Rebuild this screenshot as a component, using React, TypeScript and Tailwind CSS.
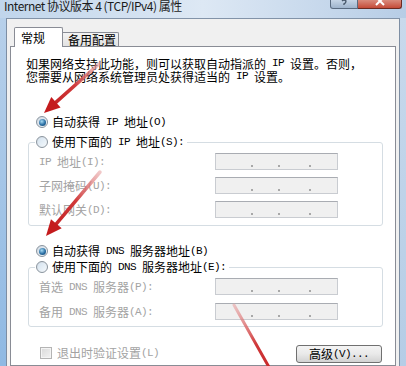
import React from "react";

function T({ s, className = "" }: { s: string; className?: string }) {
  const parts = s.split(/([\x20-\x7e]+)/).filter((p) => p.length > 0);
  return (
    <span className={`flex items-center whitespace-pre ${className}`}>
      {parts.map((p, i) =>
        /^[\x20-\x7e]+$/.test(p) ? (
          <span
            key={i}
            className="font-['Liberation_Mono',monospace] text-[11px] tracking-[-0.6px] whitespace-pre"
          >
            {p}
          </span>
        ) : (
          <span key={i}>{p}</span>
        )
      )}
    </span>
  );
}

function Radio({ checked }: { checked?: boolean }) {
  return (
    <span className="flex h-[12px] w-[12px] shrink-0 items-center justify-center rounded-full border border-[#8a949e] bg-gradient-to-br from-[#cfd9e3] to-[#f7fafc]">
      {checked ? (
        <span className="h-[7px] w-[7px] rounded-full bg-[radial-gradient(circle_at_40%_35%,#a8dcf5,#2a6ea3_55%,#123f66)]" />
      ) : (
        <span className="h-[8px] w-[8px] rounded-full bg-gradient-to-br from-[#d6e4f0] to-[#f2f7fb]" />
      )}
    </span>
  );
}

function RadioRow({ checked, label }: { checked?: boolean; label: string }) {
  return (
    <div className="flex h-[14px] items-center gap-[4px] whitespace-nowrap leading-[14px]">
      <Radio checked={checked} />
      <T s={label} />
    </div>
  );
}

function IpField() {
  return (
    <div className="flex h-[17px] w-[123px] items-start border border-[#c9ccd1] border-t-[#a9acb2] bg-[#f0f0f0] pt-[11px]">
      <span className="ml-[35px] h-[2px] w-[2px] bg-[#a8a8a8]" />
      <span className="ml-[25px] h-[2px] w-[2px] bg-[#a8a8a8]" />
      <span className="ml-[29px] h-[2px] w-[2px] bg-[#a8a8a8]" />
    </div>
  );
}

function FieldRow({ label }: { label: string }) {
  return (
    <div className="flex items-center">
      <div className="w-[186px] pl-[10px] leading-[14px] text-[#a3a3a3] whitespace-nowrap">
        <T s={label} />
      </div>
      <IpField />
    </div>
  );
}

function Arrow({
  id,
  tail,
  tip,
  w = 3,
}: {
  id: string;
  tail: [number, number];
  tip: [number, number];
  w?: number;
}) {
  const dx = tip[0] - tail[0];
  const dy = tip[1] - tail[1];
  const len = Math.hypot(dx, dy);
  const ux = dx / len;
  const uy = dy / len;
  const hl = 16;
  const hw = 7;
  const bx = tip[0] - hl * ux;
  const by = tip[1] - hl * uy;
  const nx = -uy;
  const ny = ux;
  const p1 = `${bx + hw * nx},${by + hw * ny}`;
  const p2 = `${bx - hw * nx},${by - hw * ny}`;
  return (
    <g>
      <defs>
        <linearGradient
          id={id}
          gradientUnits="userSpaceOnUse"
          x1={tail[0]}
          y1={tail[1]}
          x2={tip[0]}
          y2={tip[1]}
        >
          <stop offset="0" stopColor="#e7a3a3" stopOpacity="0.6" />
          <stop offset="0.45" stopColor="#d0393a" />
          <stop offset="1" stopColor="#c01a1c" />
        </linearGradient>
      </defs>
      <line
        x1={tail[0]}
        y1={tail[1]}
        x2={bx + ux * 2}
        y2={by + uy * 2}
        stroke={`url(#${id})`}
        strokeWidth={w}
        strokeLinecap="round"
      />
      <polygon points={`${tip[0]},${tip[1]} ${p1} ${p2}`} fill="#c41b1d" />
    </g>
  );
}

export default function App() {
  return (
    <div className="relative h-[366px] w-[406px] overflow-hidden bg-[#a9c7e6] font-['Noto_Sans_CJK_SC',sans-serif] text-[12px] leading-[14px] text-black">
      {/* title bar */}
      <div className="flex h-[18px] items-start bg-gradient-to-r from-[#c0d5eb] via-[#dde8f4] to-[#b7cde6]">
        <div className="whitespace-nowrap pl-[4px] text-[12px] leading-[12px] tracking-[-0.5px] text-[#1b1b1b]">
          Internet 协议版本 4 (TCP/IPv4) 属性
        </div>
        <div className="flex-1" />
        <div className="mr-[4px] flex">
          <div className="flex h-[9px] w-[28px] items-start justify-center overflow-hidden rounded-bl-[3px] border border-t-0 border-[#5a6b80] bg-gradient-to-b from-[#c6d5e6] to-[#9fb4cc]">
            <svg width="6" height="7" viewBox="0 0 6 7">
              <path d="M1 1 Q3 -1 5 1 Q5 3 3 4 L3 5" stroke="#4a5a6c" strokeWidth="1.4" fill="none" />
            </svg>
          </div>
          <div className="flex h-[9px] w-[44px] items-start justify-center overflow-hidden rounded-br-[3px] border border-l-0 border-t-0 border-[#6b2a22] bg-gradient-to-b from-[#d98a7c] to-[#c44a38]">
            <svg width="10" height="6" viewBox="0 3 10 6">
              <path d="M1 0 L9 8 M9 0 L1 8" stroke="#ffffff" strokeWidth="2" />
            </svg>
          </div>
        </div>
      </div>

      {/* body */}
      <div className="flex h-[348px]">
        <div className="w-[6px] bg-gradient-to-b from-[#b7d0ea] to-[#8fb9e3]" />
        <div className="flex flex-1 flex-col border-l border-r border-t border-[#7d8ea3] border-t-[#8293a8] bg-[#f0f0f0] pl-[3px] pr-[3px] pt-[8px]">
          {/* tabs */}
          <div className="relative z-10 flex items-end pl-[4px]">
            <div className="-mb-[1px] h-[20px] w-[49px] rounded-t-[2px] border border-b-0 border-[#898c95] bg-white pl-[6px] pt-[3px] leading-[13px]">
              常规
            </div>
            <div className="h-[14px] w-[56px] rounded-tr-[2px] border border-b-0 border-l-0 border-[#898c95] bg-gradient-to-b from-[#f3f3f3] to-[#e2e2e2] pl-[5px] pt-[1px] leading-[12px]">
              备用配置
            </div>
          </div>

          {/* panel */}
          <div className="flex flex-1 flex-col border border-[#898c95] bg-white pl-[15px] pt-[10px]">
            <div className="leading-[13px] whitespace-nowrap">
              <T s="如果网络支持此功能，则可以获取自动指派的 IP 设置。否则，" />
              <T s="您需要从网络系统管理员处获得适当的 IP 设置。" />
            </div>

            <div className="mt-[32px] pl-[10px]">
              <RadioRow checked label="自动获得 IP 地址(O)" />
            </div>

            <fieldset className="ml-[2px] mt-[6px] w-[355px] rounded-[3px] border border-[#d5dde3] pb-[7px]">
              <legend className="ml-[6px] pl-[1px] pr-[3px]">
                <RadioRow label="使用下面的 IP 地址(S):" />
              </legend>
              <div className="flex flex-col gap-[7px] pt-[4px]">
                <FieldRow label="IP 地址(I):" />
                <FieldRow label="子网掩码(U):" />
                <FieldRow label="默认网关(D):" />
              </div>
            </fieldset>

            <div className="mt-[18px] pl-[10px]">
              <RadioRow checked label="自动获得 DNS 服务器地址(B)" />
            </div>

            <fieldset className="ml-[2px] mt-[2px] w-[355px] rounded-[3px] border border-[#d5dde3] pb-[6px]">
              <legend className="ml-[6px] pl-[1px] pr-[3px]">
                <RadioRow label="使用下面的 DNS 服务器地址(E):" />
              </legend>
              <div className="flex flex-col gap-[8px] pt-[4px]">
                <FieldRow label="首选 DNS 服务器(P):" />
                <FieldRow label="备用 DNS 服务器(A):" />
              </div>
            </fieldset>

            <div className="ml-[2px] mt-[18px] flex w-[355px] items-start justify-between">
              <div className="flex items-center pl-[12px] pt-[1px]">
                <span className="flex h-[12px] w-[12px] items-center justify-center border border-[#b4b4b4] bg-[#f4f4f4]">
                  <span className="h-[8px] w-[8px] bg-gradient-to-br from-[#dcdcdc] to-[#f0f0f0]" />
                </span>
                <span className="ml-[5px] whitespace-nowrap leading-[14px] text-[#a3a3a3]">
                  <T s="退出时验证设置(L)" />
                </span>
              </div>
              <div className="mr-[1px] flex h-[18px] w-[86px] items-center justify-center rounded-[3px] border border-[#707070] bg-gradient-to-b from-[#f4f4f4] via-[#e9e9e9] to-[#d2d2d2] leading-[14px]">
                <T s="高级(V)..." />
              </div>
            </div>
          </div>
        </div>
        <div className="w-[6px] bg-gradient-to-b from-[#c8d9ec] to-[#b5cde6]" />
      </div>

      {/* annotation arrows */}
      <svg
        className="pointer-events-none absolute left-0 top-0"
        width="406"
        height="366"
        viewBox="0 0 406 366"
      >
        <Arrow id="a1" tail={[100, 63]} tip={[44, 113]} w={3.5} />
        <Arrow id="a2" tail={[100, 172]} tip={[46, 236]} w={3.5} />
        <Arrow id="a3" tail={[234, 305]} tip={[283, 392]} w={3} />
      </svg>
    </div>
  );
}
